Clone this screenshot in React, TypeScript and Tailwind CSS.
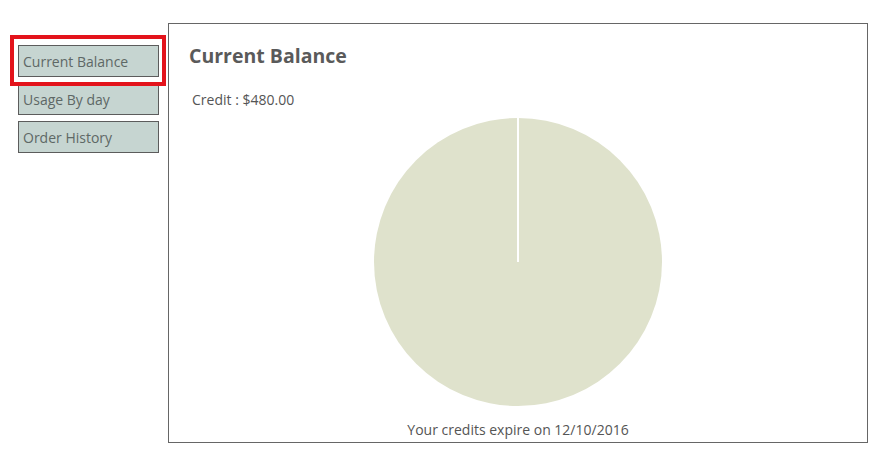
import React from 'react';

const tabs = ['Current Balance', 'Usage By day', 'Order History'];

export default function App() {
  return (
    <div className="w-[880px] h-[456px] bg-white flex pl-[18px] pt-[23px] font-['Open_Sans',sans-serif] relative">
      {/* annotation highlight around active tab */}
      <div className="absolute left-[10px] top-[35px] w-[156px] h-[51px] border-[4px] border-[#e3131b]" />

      <div className="w-[141px] mt-[22px] flex flex-col gap-[6px]">
        {tabs.map((t) => (
          <button
            key={t}
            className="h-[32px] w-full text-left pl-[4px] bg-[#c6d5d1] border border-[#5c5c5c] text-[14px] text-[#5e6866]"
          >
            {t}
          </button>
        ))}
      </div>

      <div className="ml-[9px] w-[700px] h-[420px] border border-[#666] flex flex-col">
        <h1 className="ml-[20px] mt-[18px] text-[19.5px] leading-[28px] font-bold text-[#5a5a5a]">Current Balance</h1>
        <p className="ml-[23px] mt-[20px] text-[14px] leading-[20px] text-[#555]">Credit : $480.00</p>
        <div className="flex justify-center mt-[7px]">
          <svg width="290" height="290" viewBox="0 0 290 290">
            <circle cx="145" cy="145" r="144" fill="#dfe2cc" />
            <line x1="145" y1="145" x2="145" y2="0" stroke="#fff" strokeWidth="2" />
          </svg>
        </div>
        <p className="text-center text-[14px] leading-[20px] text-[#555] mt-[13px]">Your credits expire on 12/10/2016</p>
      </div>
    </div>
  );
}
